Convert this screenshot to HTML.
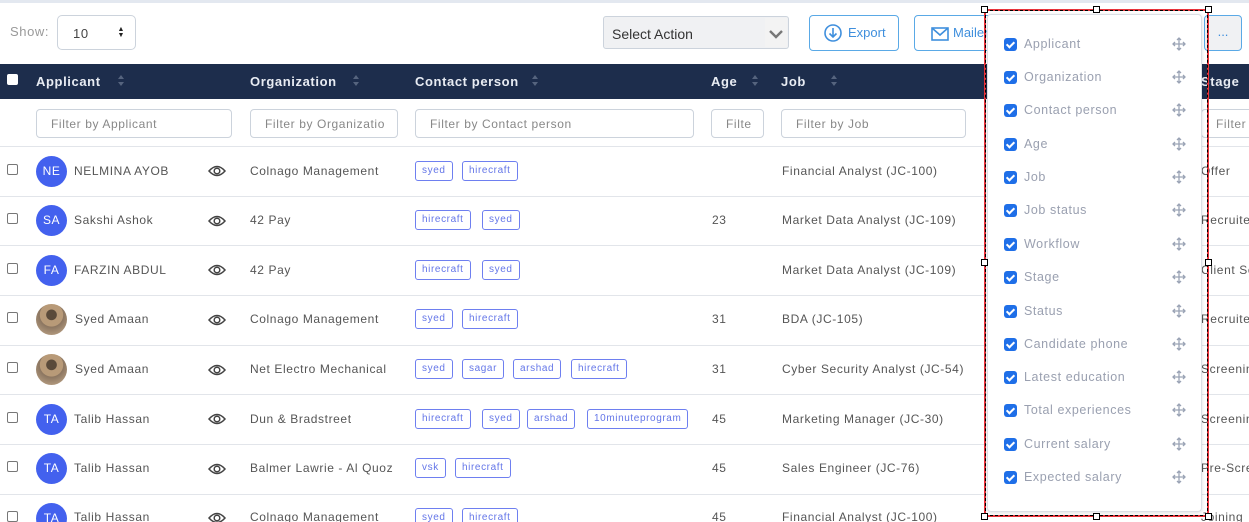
<!DOCTYPE html>
<html><head><meta charset="utf-8"><style>
*{box-sizing:border-box;margin:0;padding:0}
html,body{width:1249px;height:522px;overflow:hidden}
body{background:#fff;font-family:"Liberation Sans",sans-serif;color:#555;position:relative;font-size:12px;letter-spacing:.6px}
.a{position:absolute;white-space:nowrap}
.top{left:0;top:0;width:1249px;height:3px;background:#e3e8f0}
.btn{border:1px solid #5aa9e6;border-radius:4px;color:#3f8fdd;font-size:13px;letter-spacing:0}
.hdr{left:0;top:64px;width:1249px;height:35px;background:#1d2d4c;color:#e8ecf3;font-weight:bold;font-size:13px}
.hdr span{position:absolute;top:10px}
.sort{position:absolute;top:11px;width:6px;height:13px}
.sort:before{content:"";position:absolute;left:0;top:0;border:3px solid transparent;border-bottom:4px solid #56647e;border-top:0}
.sort:after{content:"";position:absolute;left:0;top:7px;border:3px solid transparent;border-top:4px solid #56647e;border-bottom:0}
.fi{position:absolute;top:109px;height:29px;border:1px solid #ccd3dc;border-radius:4px;color:#888;font-size:12px;padding:7px 0 0 14px;overflow:hidden;white-space:nowrap}
.line{position:absolute;left:0;width:1249px;height:1px;background:#e2e5ea}
.cb{position:absolute;left:7px;width:11px;height:11px;border:1px solid #777;border-radius:2px;background:#fff}
.av{position:absolute;left:36px;width:31px;height:31px;border-radius:50%;background:#4361ee;color:#fff;font-size:12px;text-align:center;line-height:31px;letter-spacing:.5px}
.ph{background:radial-gradient(circle at 50% 35%,#5a4a3a 0 20%,#b89a78 22% 45%,#8b7560 47%,#c7ad8e 100%)}
.tag{position:absolute;height:20px;border:1px solid #6e7ff0;border-radius:3px;color:#6476e8;font-size:10px;padding:3px 6px 0;letter-spacing:.6px}
.panel{left:987px;top:14px;width:215px;height:498px;background:#fff;border:1px solid #dcdfe5;border-radius:4px;box-shadow:0 1px 4px rgba(0,0,0,.12)}
.it{position:absolute;left:1004px;height:14px;width:190px}
.it i{position:absolute;left:0;top:0;width:13px;height:13px;background:#1f6fe8;border-radius:3px}
.it i:after{content:"";position:absolute;left:4px;top:2px;width:3px;height:6px;border:solid #fff;border-width:0 2px 2px 0;transform:rotate(45deg)}
.it b{position:absolute;left:20px;top:-1px;font-weight:normal;color:#9aa0b0;font-size:12.5px}
.it svg{position:absolute;left:168px;top:-1px}
.sel{left:984px;top:9px;width:225px;height:508px;border:2px solid #e8333b;outline:1px dashed #000;outline-offset:-2px}
.h{position:absolute;width:7px;height:7px;background:#fff;border:1px solid #000}
</style></head><body>
<div class="a top"></div>
<div class="a" style="left:10px;top:24px;color:#999;font-size:13px">Show:</div>
<div class="a" style="left:57px;top:15px;width:79px;height:35px;border:1px solid #ccd3dc;border-radius:5px;font-size:13px;padding:10px 0 0 15px;color:#444">10<span style="position:absolute;right:10px;top:11px;font-size:7px;line-height:6px;color:#222">▲<br>▼</span></div>
<div class="a" style="left:603px;top:16px;width:186px;height:33px;border:1px solid #ccd3dc;border-radius:3px;background:#f0f1f3;font-size:14px;padding:9px 0 0 8px;color:#333;letter-spacing:0">Select Action<span style="position:absolute;right:1px;top:1px;width:22px;height:29px;background:#f3f3f3"><svg width="16" height="10" viewBox="0 0 16 10" style="position:absolute;left:3px;top:11px"><path d="M2 2l6 6 6-6" fill="none" stroke="#777" stroke-width="2.4"/></svg></span></div>
<div class="a btn" style="left:809px;top:15px;width:90px;height:36px;padding:9px 0 0 14px"><svg width="18" height="18" viewBox="0 0 18 18" style="position:absolute;left:14px;top:8px"><circle cx="9" cy="9" r="8" fill="none" stroke="#3f8fdd" stroke-width="1.6"/><path d="M9 4v9M5.5 9.5 9 13l3.5-3.5" fill="none" stroke="#3f8fdd" stroke-width="1.6"/></svg><span style="margin-left:24px">Export</span></div>
<div class="a btn" style="left:914px;top:15px;width:80px;height:36px;padding:9px 0 0 16px"><svg width="18" height="14" viewBox="0 0 18 14" style="position:absolute;left:16px;top:11px"><rect x="1" y="1" width="16" height="12" fill="none" stroke="#3f8fdd" stroke-width="1.6"/><path d="M1 1l8 7 8-7" fill="none" stroke="#3f8fdd" stroke-width="1.6"/></svg><span style="margin-left:22px">Mailer</span></div>
<div class="a btn" style="left:1204px;top:15px;width:38px;height:36px;background:#f0f1f3;text-align:center;padding-top:8px">...</div>

<div class="a hdr">
<div style="position:absolute;left:7px;top:10px;width:11px;height:11px;background:#fff;border-radius:2px"></div>
<span style="left:36px">Applicant</span><i class="sort" style="left:118px"></i>
<span style="left:250px">Organization</span><i class="sort" style="left:353px"></i>
<span style="left:415px">Contact person</span><i class="sort" style="left:532px"></i>
<span style="left:711px">Age</span><i class="sort" style="left:752px"></i>
<span style="left:781px">Job</span><i class="sort" style="left:831px"></i>
<span style="left:1201px">Stage</span>
</div>
<div class="fi" style="left:36px;width:196px">Filter by Applicant</div>
<div class="fi" style="left:250px;width:148px">Filter by Organizatio</div>
<div class="fi" style="left:415px;width:279px">Filter by Contact person</div>
<div class="fi" style="left:711px;width:53px">Filte</div>
<div class="fi" style="left:781px;width:185px">Filter by Job</div>
<div class="fi" style="left:1201px;width:60px">Filter</div>

<div class="line" style="top:146px"></div><div class="line" style="top:196px"></div><div class="line" style="top:245px"></div><div class="line" style="top:295px"></div><div class="line" style="top:345px"></div><div class="line" style="top:394px"></div><div class="line" style="top:444px"></div><div class="line" style="top:494px"></div>

<div class="cb" style="top:164px"></div><div class="av" style="top:156px">NE</div><div class="a" style="left:74px;top:164px">NELMINA AYOB</div>
<div class="cb" style="top:213px"></div><div class="av" style="top:205px">SA</div><div class="a" style="left:74px;top:213px">Sakshi Ashok</div>
<div class="cb" style="top:263px"></div><div class="av" style="top:255px">FA</div><div class="a" style="left:74px;top:263px">FARZIN ABDUL</div>
<div class="cb" style="top:312px"></div><div class="av ph" style="top:304px"></div><div class="a" style="left:75px;top:312px">Syed Amaan</div>
<div class="cb" style="top:362px"></div><div class="av ph" style="top:354px"></div><div class="a" style="left:75px;top:362px">Syed Amaan</div>
<div class="cb" style="top:412px"></div><div class="av" style="top:404px">TA</div><div class="a" style="left:74px;top:412px">Talib Hassan</div>
<div class="cb" style="top:461px"></div><div class="av" style="top:453px">TA</div><div class="a" style="left:74px;top:461px">Talib Hassan</div>
<div class="cb" style="top:511px"></div><div class="av" style="top:503px">TA</div><div class="a" style="left:74px;top:510px">Talib Hassan</div>

<svg class="a" style="left:208px;top:0" width="18" height="522" viewBox="0 0 18 522" fill="none" stroke="#444" stroke-width="1.5">
<g id="e"><path d="M1 171q8-9 16 0q-8 9-16 0z"/><circle cx="9" cy="171" r="2.8"/></g>
<use href="#e" y="50"/><use href="#e" y="99"/><use href="#e" y="149"/><use href="#e" y="199"/><use href="#e" y="248"/><use href="#e" y="298"/><use href="#e" y="347"/>
</svg>

<div class="a" style="left:250px;top:164px">Colnago Management</div>
<div class="a" style="left:250px;top:213px">42 Pay</div>
<div class="a" style="left:250px;top:263px">42 Pay</div>
<div class="a" style="left:250px;top:312px">Colnago Management</div>
<div class="a" style="left:250px;top:362px">Net Electro Mechanical</div>
<div class="a" style="left:250px;top:412px">Dun &amp; Bradstreet</div>
<div class="a" style="left:250px;top:461px">Balmer Lawrie - Al Quoz</div>
<div class="a" style="left:250px;top:510px">Colnago Management</div>

<div class="tag" style="left:415px;top:161px">syed</div><div class="tag" style="left:462px;top:161px">hirecraft</div>
<div class="tag" style="left:415px;top:210px">hirecraft</div><div class="tag" style="left:482px;top:210px">syed</div>
<div class="tag" style="left:415px;top:260px">hirecraft</div><div class="tag" style="left:482px;top:260px">syed</div>
<div class="tag" style="left:415px;top:309px">syed</div><div class="tag" style="left:462px;top:309px">hirecraft</div>
<div class="tag" style="left:415px;top:359px">syed</div><div class="tag" style="left:462px;top:359px">sagar</div><div class="tag" style="left:513px;top:359px">arshad</div><div class="tag" style="left:571px;top:359px">hirecraft</div>
<div class="tag" style="left:415px;top:409px">hirecraft</div><div class="tag" style="left:482px;top:409px">syed</div><div class="tag" style="left:527px;top:409px">arshad</div><div class="tag" style="left:587px;top:409px">10minuteprogram</div>
<div class="tag" style="left:415px;top:458px">vsk</div><div class="tag" style="left:455px;top:458px">hirecraft</div>
<div class="tag" style="left:415px;top:508px">syed</div><div class="tag" style="left:462px;top:508px">hirecraft</div>

<div class="a" style="left:712px;top:213px">23</div>
<div class="a" style="left:712px;top:312px">31</div>
<div class="a" style="left:712px;top:362px">31</div>
<div class="a" style="left:712px;top:412px">45</div>
<div class="a" style="left:712px;top:461px">45</div>
<div class="a" style="left:712px;top:510px">45</div>

<div class="a" style="left:782px;top:164px">Financial Analyst (JC-100)</div>
<div class="a" style="left:782px;top:213px">Market Data Analyst (JC-109)</div>
<div class="a" style="left:782px;top:263px">Market Data Analyst (JC-109)</div>
<div class="a" style="left:782px;top:312px">BDA (JC-105)</div>
<div class="a" style="left:782px;top:362px">Cyber Security Analyst (JC-54)</div>
<div class="a" style="left:782px;top:412px">Marketing Manager (JC-30)</div>
<div class="a" style="left:782px;top:461px">Sales Engineer (JC-76)</div>
<div class="a" style="left:782px;top:510px">Financial Analyst (JC-100)</div>

<div class="a" style="left:1201px;top:164px">Offer</div>
<div class="a" style="left:1201px;top:213px">Recruiter</div>
<div class="a" style="left:1201px;top:263px">Client Sc</div>
<div class="a" style="left:1201px;top:312px">Recruiter</div>
<div class="a" style="left:1201px;top:362px">Screening</div>
<div class="a" style="left:1201px;top:412px">Screening</div>
<div class="a" style="left:1201px;top:461px">Pre-Scree</div>
<div class="a" style="left:1201px;top:510px">Joining</div>

<div class="a panel"></div>
<svg width="0" height="0" style="position:absolute"><defs><g id="mv" fill="none" stroke="#9aa3b5" stroke-width="1.3"><path d="M7 1v12M1 7h12M5 3l2-2 2 2M5 11l2 2 2-2M3 5l-2 2 2 2M11 5l2 2-2 2"/></g></defs></svg>
<div class="it" style="top:38px"><i></i><b>Applicant</b><svg width="14" height="14"><use href="#mv"/></svg></div>
<div class="it" style="top:71px"><i></i><b>Organization</b><svg width="14" height="14"><use href="#mv"/></svg></div>
<div class="it" style="top:104px"><i></i><b>Contact person</b><svg width="14" height="14"><use href="#mv"/></svg></div>
<div class="it" style="top:138px"><i></i><b>Age</b><svg width="14" height="14"><use href="#mv"/></svg></div>
<div class="it" style="top:171px"><i></i><b>Job</b><svg width="14" height="14"><use href="#mv"/></svg></div>
<div class="it" style="top:204px"><i></i><b>Job status</b><svg width="14" height="14"><use href="#mv"/></svg></div>
<div class="it" style="top:238px"><i></i><b>Workflow</b><svg width="14" height="14"><use href="#mv"/></svg></div>
<div class="it" style="top:271px"><i></i><b>Stage</b><svg width="14" height="14"><use href="#mv"/></svg></div>
<div class="it" style="top:305px"><i></i><b>Status</b><svg width="14" height="14"><use href="#mv"/></svg></div>
<div class="it" style="top:338px"><i></i><b>Candidate phone</b><svg width="14" height="14"><use href="#mv"/></svg></div>
<div class="it" style="top:371px"><i></i><b>Latest education</b><svg width="14" height="14"><use href="#mv"/></svg></div>
<div class="it" style="top:404px"><i></i><b>Total experiences</b><svg width="14" height="14"><use href="#mv"/></svg></div>
<div class="it" style="top:438px"><i></i><b>Current salary</b><svg width="14" height="14"><use href="#mv"/></svg></div>
<div class="it" style="top:471px"><i></i><b>Expected salary</b><svg width="14" height="14"><use href="#mv"/></svg></div>

<div class="a sel"></div>
<div class="h" style="left:981px;top:6px"></div><div class="h" style="left:1093px;top:6px"></div><div class="h" style="left:1205px;top:6px"></div>
<div class="h" style="left:981px;top:259px"></div><div class="h" style="left:1205px;top:259px"></div>
<div class="h" style="left:981px;top:513px"></div><div class="h" style="left:1093px;top:513px"></div><div class="h" style="left:1205px;top:513px"></div>
</body></html>
